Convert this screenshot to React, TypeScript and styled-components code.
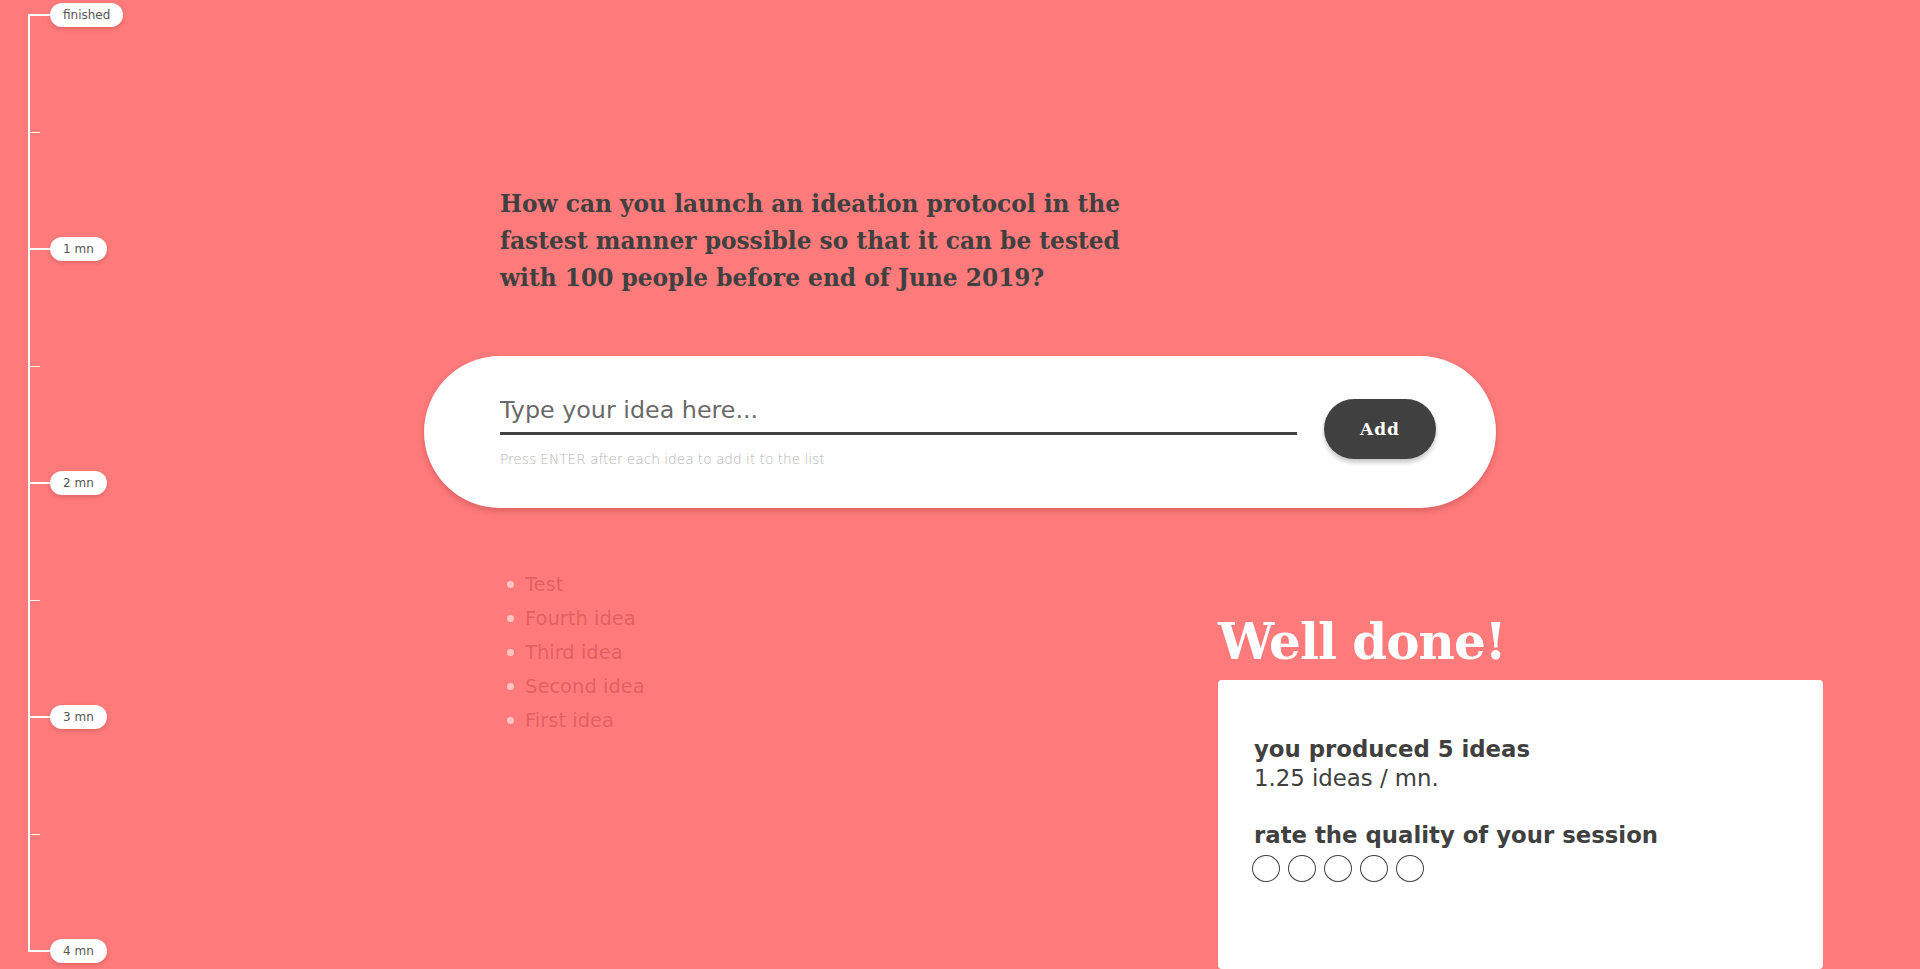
import React from "react";
import styled, { createGlobalStyle } from "styled-components";

const SANS = `"DejaVu Sans", "Open Sans", sans-serif`;
const SERIF = `"DejaVu Serif", "Liberation Serif", serif`;

const Global = createGlobalStyle`
  html, body { margin: 0; padding: 0; height: 100%; overflow: hidden; }
  body { background: #ff7b7b; font-family: ${SANS}; color: #404040; }
  * { box-sizing: border-box; }
`;

const Page = styled.div`
  display: flex;
  height: 969px;
`;

const Timeline = styled.aside`
  position: relative;
  width: 140px;
  height: 960px;
  margin-top: 3px;
  display: flex;
  flex-direction: column;
  justify-content: space-between;
  &::before {
    content: "";
    position: absolute;
    left: 28px;
    top: 11px;
    bottom: 11px;
    width: 2px;
    background: #fff;
  }
`;

const TickRow = styled.div`
  height: 24px;
  display: flex;
  align-items: center;
  padding-left: 28px;
`;

const Connector = styled.span<{ $major?: boolean }>`
  display: block;
  width: ${(p) => (p.$major ? 22 : 12)}px;
  height: ${(p) => (p.$major ? 2 : 1)}px;
  background: #fff;
`;

const Pill = styled.span`
  height: 24px;
  padding: 0 13px;
  border-radius: 12px;
  background: #fff;
  box-shadow: 0 2px 4px rgba(120, 40, 40, 0.25);
  display: inline-flex;
  align-items: center;
  font-size: 12px;
  font-weight: 400;
  color: #555;
  white-space: nowrap;
`;

const Content = styled.main`
  flex: 1;
  padding-left: 284px;
  padding-top: 185px;
  display: flex;
  flex-direction: column;
`;

const Question = styled.h1`
  margin: 0 0 0 76px;
  width: 640px;
  font-family: ${SERIF};
  font-weight: bold;
  font-size: 23.3px;
  line-height: 37px;
  color: #404040;
`;

const InputCard = styled.section`
  margin-top: 60px;
  width: 1072px;
  height: 155px;
  border-radius: 78px;
  background: #fff;
  box-shadow: 0 3px 6px rgba(150, 50, 50, 0.35);
  display: flex;
  align-items: center;
  padding: 0 60px 0 76px;
  gap: 27px;
`;

const Field = styled.div`
  flex: 1;
  display: flex;
  flex-direction: column;
  padding-bottom: 2px;
`;

const IdeaInput = styled.input`
  border: none;
  border-bottom: 3px solid #404040;
  outline: none;
  padding: 0 0 8px 0;
  font-family: ${SANS};
  font-size: 23.8px;
  font-weight: 400;
  color: #404040;
  background: transparent;
  &::placeholder { color: #6a6a6a; }
`;

const Helper = styled.div`
  margin-top: 16px;
  font-size: 13.7px;
  font-weight: 300;
  color: #b5b5b5;
`;

const AddButton = styled.button`
  width: 112px;
  height: 60px;
  margin-bottom: 7px;
  border: none;
  border-radius: 30px;
  background: #404040;
  color: #fff;
  font-family: ${SERIF};
  font-weight: bold;
  font-size: 17px;
  letter-spacing: 1px;
  box-shadow: 0 3px 5px rgba(0, 0, 0, 0.25);
  cursor: pointer;
`;

const BottomRow = styled.div`
  display: flex;
  margin-top: 56px;
`;

const IdeaList = styled.ul`
  list-style: none;
  margin: 0;
  padding: 3px 0 0 83px;
  width: 794px;
`;

const IdeaItem = styled.li`
  height: 34px;
  display: flex;
  align-items: center;
  gap: 11px;
  font-size: 19.5px;
  font-weight: 400;
  color: rgba(150, 30, 30, 0.3);
  &::before {
    content: "";
    width: 7px;
    height: 7px;
    border-radius: 50%;
    background: rgba(255, 255, 255, 0.55);
  }
`;

const Result = styled.section`
  display: flex;
  flex-direction: column;
  padding-top: 52px;
`;

const WellDone = styled.h2`
  margin: 0;
  font-family: ${SERIF};
  font-weight: bold;
  font-size: 50px;
  line-height: 52px;
  color: #fff;
  letter-spacing: -1px;
`;

const ResultCard = styled.div`
  margin-top: 12px;
  width: 605px;
  height: 289px;
  background: #fff;
  border-radius: 4px;
  padding: 55px 36px 0 36px;
  display: flex;
  flex-direction: column;
`;

const StatStrong = styled.div`
  font-size: 22.8px;
  font-weight: 700;
  line-height: 29px;
  color: #404040;
`;

const StatLine = styled.div`
  font-size: 22.8px;
  font-weight: 400;
  line-height: 29px;
  color: #404040;
`;

const RateTitle = styled(StatStrong)`
  margin-top: 28px;
`;

const Circles = styled.div`
  display: flex;
  gap: 8px;
  margin-top: 5px;
  margin-left: -2px;
`;

const Circle = styled.span`
  width: 28px;
  height: 27px;
  border-radius: 50%;
  border: 1px solid #404040;
`;

const ticks: { label?: string }[] = [
  { label: "finished" },
  {},
  { label: "1 mn" },
  {},
  { label: "2 mn" },
  {},
  { label: "3 mn" },
  {},
  { label: "4 mn" },
];

const ideas = ["Test", "Fourth idea", "Third idea", "Second idea", "First idea"];

export default function App() {
  return (
    <>
      <Global />
      <Page>
        <Timeline>
          {ticks.map((t, i) => (
            <TickRow key={i}>
              <Connector $major={!!t.label} />
              {t.label && <Pill>{t.label}</Pill>}
            </TickRow>
          ))}
        </Timeline>
        <Content>
          <Question>
            How can you launch an ideation protocol in the fastest manner possible so that it can be tested with 100 people before end of June 2019?
          </Question>
          <InputCard>
            <Field>
              <IdeaInput placeholder="Type your idea here..." />
              <Helper>Press ENTER after each idea to add it to the list</Helper>
            </Field>
            <AddButton>Add</AddButton>
          </InputCard>
          <BottomRow>
            <IdeaList>
              {ideas.map((idea) => (
                <IdeaItem key={idea}>{idea}</IdeaItem>
              ))}
            </IdeaList>
            <Result>
              <WellDone>Well done!</WellDone>
              <ResultCard>
                <StatStrong>you produced 5 ideas</StatStrong>
                <StatLine>1.25 ideas / mn.</StatLine>
                <RateTitle>rate the quality of your session</RateTitle>
                <Circles>
                  {[0, 1, 2, 3, 4].map((n) => (
                    <Circle key={n} />
                  ))}
                </Circles>
              </ResultCard>
            </Result>
          </BottomRow>
        </Content>
      </Page>
    </>
  );
}
